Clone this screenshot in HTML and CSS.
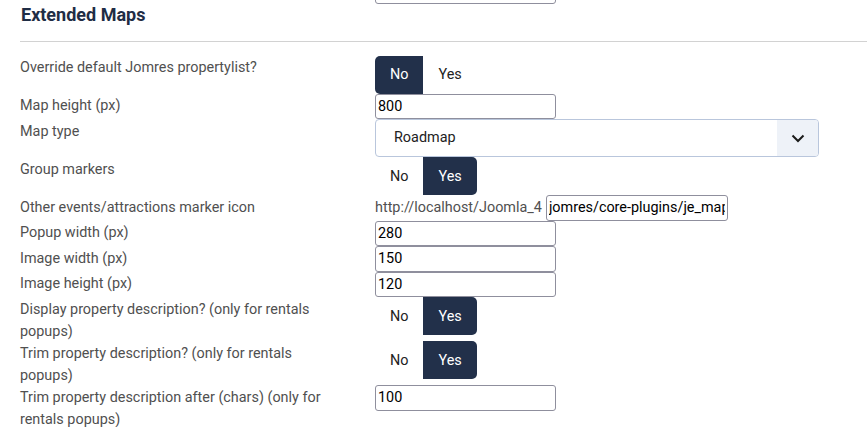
FILE: index.html
```html
<!DOCTYPE html>
<html>
<head>
  <meta charset="utf-8">
  <title>Extended Maps</title>
  <link rel="stylesheet" href="styles.css">
</head>
<body>
  <div id="settings">
    <!-- tail end of the previous section, scrolled mostly out of view -->
    <div class="form-row prev-row">
      <div class="control-label"></div>
      <div class="controls"><input type="text" class="text-input" value=""></div>
    </div>

    <h3 class="section-title">Extended Maps</h3>

    <div class="form-row">
      <label class="control-label">Override default Jomres propertylist?</label>
      <div class="controls">
        <div class="btn-group">
          <button class="btn active">No</button>
          <button class="btn">Yes</button>
        </div>
      </div>
    </div>

    <div class="form-row">
      <label class="control-label">Map height (px)</label>
      <div class="controls"><input type="text" class="text-input" value="800"></div>
    </div>

    <div class="form-row">
      <label class="control-label">Map type</label>
      <div class="controls">
        <div class="custom-select">
          <span class="select-value">Roadmap</span>
          <span class="select-arrow">
            <svg width="14" height="9" viewBox="0 0 14 9"><path d="M1.5 1.5 L7 7 L12.5 1.5" fill="none" stroke="#1b1b1b" stroke-width="2"/></svg>
          </span>
        </div>
      </div>
    </div>

    <div class="form-row">
      <label class="control-label">Group markers</label>
      <div class="controls">
        <div class="btn-group">
          <button class="btn">No</button>
          <button class="btn active">Yes</button>
        </div>
      </div>
    </div>

    <div class="form-row">
      <label class="control-label">Other events/attractions marker icon</label>
      <div class="controls">
        <span class="url-prefix">http://localhost/Joomla_4</span>
        <input type="text" class="text-input short" value="jomres/core-plugins/je_maps/markers/event.png">
      </div>
    </div>

    <div class="form-row">
      <label class="control-label">Popup width (px)</label>
      <div class="controls"><input type="text" class="text-input" value="280"></div>
    </div>

    <div class="form-row">
      <label class="control-label">Image width (px)</label>
      <div class="controls"><input type="text" class="text-input" value="150"></div>
    </div>

    <div class="form-row">
      <label class="control-label">Image height (px)</label>
      <div class="controls"><input type="text" class="text-input" value="120"></div>
    </div>

    <div class="form-row">
      <label class="control-label">Display property description? (only for rentals popups)</label>
      <div class="controls">
        <div class="btn-group">
          <button class="btn">No</button>
          <button class="btn active">Yes</button>
        </div>
      </div>
    </div>

    <div class="form-row">
      <label class="control-label">Trim property description? (only for rentals popups)</label>
      <div class="controls">
        <div class="btn-group">
          <button class="btn">No</button>
          <button class="btn active">Yes</button>
        </div>
      </div>
    </div>

    <div class="form-row">
      <label class="control-label">Trim property description after (chars) (only for rentals popups)</label>
      <div class="controls"><input type="text" class="text-input" value="100"></div>
    </div>
  </div>
</body>
</html>
```

FILE: styles.css
```css
body {
  margin: 0;
  padding: 0;
  background-color: #fff;
  font-family: Roboto, "Liberation Sans", sans-serif;
  font-size: 14.4px;
  color: #505050;
  overflow: hidden;
}

#settings {
  padding-left: 20px;
}

.form-row {
  display: grid;
  grid-template-columns: 315px 1fr;
  column-gap: 40px;
  align-items: start;
}

.prev-row {
  margin-top: -21.5px;
}

.control-label {
  line-height: 22px;
  padding-top: 1.5px;
  margin-bottom: -1.5px;
  color: #505050;
}

.controls {
  display: flex;
  align-items: center;
}

.section-title {
  margin: 0 0 14px 0;
  padding: 0 0 15px 1px;
  font-size: 18px;
  line-height: 21.5px;
  font-weight: 700;
  color: #1f2d45;
  border-bottom: 1px solid #d2d2d2;
}

/* plain text inputs */
.text-input {
  box-sizing: border-box;
  width: 181px;
  height: 25.5px;
  margin: 0;
  padding: 0 2px;
  font-family: Roboto, "Liberation Sans", sans-serif;
  font-size: 14.4px;
  color: #000;
  border: 1px solid #8f8f9d;
  border-radius: 3px;
  background: #fff;
}

.text-input.short {
  width: 182px;
  margin-left: 4px;
}

.url-prefix {
  color: #505050;
  white-space: nowrap;
}

/* yes / no switcher */
.btn-group {
  display: flex;
}

.btn {
  height: 38px;
  margin: 0;
  padding: 0 15px;
  font-family: Roboto, "Liberation Sans", sans-serif;
  font-size: 14.4px;
  color: #222;
  background: transparent;
  border: 0;
  border-radius: 0;
}

.btn.active {
  background-color: #22304a;
  color: #fff;
}

.btn:first-child {
  border-radius: 5px 0 0 5px;
}

.btn:last-child {
  border-radius: 0 5px 5px 0;
}

/* dropdown */
.custom-select {
  box-sizing: border-box;
  display: flex;
  width: 444px;
  height: 38px;
  border: 1px solid #b9c6dc;
  border-radius: 4px;
  overflow: hidden;
  color: #222;
}

.select-value {
  flex-grow: 1;
  padding-left: 18px;
  line-height: 36px;
}

.select-arrow {
  display: flex;
  align-items: center;
  justify-content: center;
  width: 41px;
  background-color: #eef2f8;
}
```
